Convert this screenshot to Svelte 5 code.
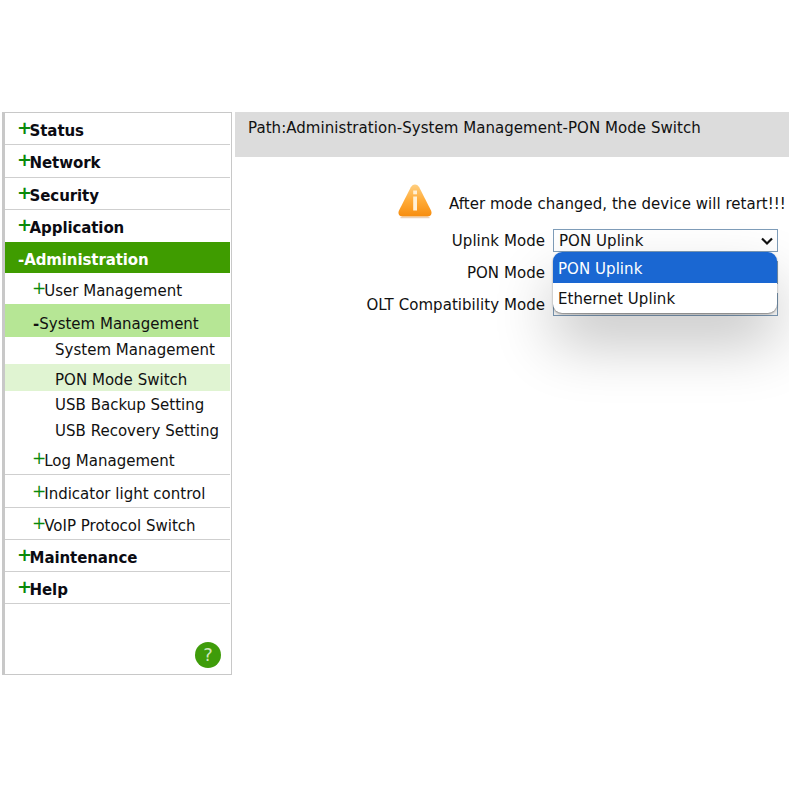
<script>
	const topBefore = ['Status', 'Network', 'Security', 'Application'];
	const subPages = [
		{ name: 'System Management', cls: 'first' },
		{ name: 'PON Mode Switch', cls: 'active' },
		{ name: 'USB Backup Setting', cls: 'backup' },
		{ name: 'USB Recovery Setting', cls: 'last' }
	];
	const subAfter = [
		{ name: 'Log Management', cls: '' },
		{ name: 'Indicator light control', cls: 'tall' },
		{ name: 'VoIP Protocol Switch', cls: '' }
	];
	const topAfter = ['Maintenance', 'Help'];
</script>

<div class="page">
	<aside class="sidebar">
		{#each topBefore as name}
			<div class="top-item"><span class="plus">+</span>{name}</div>
		{/each}
		<div class="top-item open"><span class="minus">-</span>Administration</div>
		<div class="sub-item plain"><span class="plus">+</span>User Management</div>
		<div class="sub-item open"><span class="minus">-</span>System Management</div>
		{#each subPages as page}
			<div class="page-item {page.cls}">{page.name}</div>
		{/each}
		{#each subAfter as item}
			<div class="sub-item {item.cls}"><span class="plus">+</span>{item.name}</div>
		{/each}
		{#each topAfter as name}
			<div class="top-item tail"><span class="plus">+</span>{name}</div>
		{/each}
		<div class="help-wrap">
			<div class="help">?</div>
		</div>
	</aside>

	<main class="content">
		<div class="path">Path:Administration-System Management-PON Mode Switch</div>
		<div class="warning">
			<svg width="38" height="37" viewBox="0 0 38 37">
				<defs>
					<linearGradient id="warn" x1="0" y1="0" x2="0" y2="1">
						<stop offset="0" stop-color="#ffcf80" />
						<stop offset="0.5" stop-color="#ffab38" />
						<stop offset="1" stop-color="#f78d0e" />
					</linearGradient>
				</defs>
				<path
					d="M19 1.500c2 0 3.300 1.200 4.200 2.800l11.800 23.200c1.500 3.200-.3 6-3.500 6H6.500c-3.200 0-5-2.800-3.500-6L14.800 4.300C15.700 2.700 17 1.500 19 1.500z"
					fill="url(#warn)"
				/>
				<path d="M4.500 34.500h29" stroke="#dcb48c" stroke-width="1.500" opacity="0.6" />
				<rect x="17.200" y="13.500" width="3.800" height="14" fill="#fff0d6" />
				<rect x="17.200" y="7.500" width="3.800" height="3.800" fill="#fff0d6" />
			</svg>
			<span class="warning-text">After mode changed, the device will retart!!!</span>
		</div>
		<div class="form">
			<div class="row">
				<span class="label">Uplink Mode</span>
				<div class="select">
					PON Uplink
					<svg class="chevron" width="14" height="9" viewBox="0 0 14 9">
						<path d="M2 1.500l5 5 5-5" fill="none" stroke="#111" stroke-width="2.200" />
					</svg>
				</div>
				<div class="popup">
					<div class="option selected">PON Uplink</div>
					<div class="option">Ethernet Uplink</div>
				</div>
			</div>
			<div class="row">
				<span class="label">PON Mode</span>
				<div class="select"></div>
			</div>
			<div class="row">
				<span class="label">OLT Compatibility Mode</span>
				<div class="select"></div>
			</div>
		</div>
	</main>
</div>

<style>
	:global(body) {
		margin: 0;
		background: #fff;
	}
	.page {
		display: flex;
		height: 789px;
		box-sizing: border-box;
		padding: 112px 0 0 2px;
		font-family: 'DejaVu Sans', Verdana, sans-serif;
		font-size: 15px;
		letter-spacing: 0.05px;
		color: #111;
		overflow: hidden;
	}
	.sidebar {
		width: 230px;
		height: 563px;
		box-sizing: border-box;
		border: 1px solid #c8c8c8;
		border-left-width: 3px;
		padding-right: 1px;
		display: flex;
		flex-direction: column;
		flex-shrink: 0;
	}
	.top-item {
		height: 32.400px;
		flex-shrink: 0;
		box-sizing: border-box;
		padding: 7px 0 0 13px;
		font-weight: bold;
		letter-spacing: -0.1px;
		line-height: 20px;
		border-bottom: 1px solid #cfcfcf;
		color: #0b0b12;
	}
	.top-item.open {
		height: 31px;
		margin-top: -0.800px;
		background: #3f9c00;
		color: #fff;
		border-bottom: none;
		padding-top: 8px;
	}
	.top-item.tail {
		height: 32px;
	}
	.sub-item {
		height: 32px;
		flex-shrink: 0;
		box-sizing: border-box;
		padding: 7px 0 0 28px;
		letter-spacing: 0;
		line-height: 20px;
		border-bottom: 1px solid #cfcfcf;
	}
	.sub-item.tall {
		height: 32.900px;
		padding-top: 8px;
	}
	.sub-item.plain {
		height: 31px;
		border-bottom: none;
	}
	.sub-item.open {
		background: #b6e695;
		border-bottom: none;
		height: 33px;
		padding-top: 10px;
	}
	.page-item {
		height: 27px;
		flex-shrink: 0;
		box-sizing: border-box;
		padding: 3px 0 0 50px;
		letter-spacing: 0.02px;
		line-height: 20px;
	}
	.page-item.active {
		background: #e0f4d2;
		padding-top: 6px;
	}
	.page-item.backup {
		height: 26.300px;
		padding-top: 4px;
	}
	.page-item.last {
		height: 26px;
		padding-top: 4px;
	}
	.plus {
		color: #0a8a0a;
		font-weight: bold;
		font-size: 18px;
		position: relative;
		top: -2px;
		letter-spacing: -3.500px;
		margin-left: -1px;
		margin-right: 1px;
	}
	.sub-item .plus {
		font-weight: normal;
		font-size: 17px;
		letter-spacing: -3px;
		margin-right: 1px;
	}
	.minus {
		font-weight: bold;
	}
	.help-wrap {
		flex: 1;
		display: flex;
		justify-content: flex-end;
		align-items: flex-end;
		padding: 0 9px 6px 0;
	}
	.help {
		width: 26px;
		height: 26px;
		border-radius: 50%;
		background: #3f9c0a;
		color: #cfe6bd;
		text-align: center;
		line-height: 26px;
		font-size: 18px;
	}
	.content {
		flex: 1;
		margin-left: 3px;
		min-width: 0;
	}
	.path {
		height: 45px;
		box-sizing: border-box;
		background: #dcdcdc;
		padding: 6px 0 0 13px;
		line-height: 20px;
		white-space: nowrap;
	}
	.warning {
		display: flex;
		align-items: center;
		gap: 15px;
		margin: 26px 0 0 161px;
		height: 37px;
		white-space: nowrap;
		letter-spacing: 0.03px;
	}
	.warning-text {
		padding-top: 5px;
	}
	.form {
		margin-top: 4px;
	}
	.row {
		position: relative;
		display: flex;
		align-items: center;
		justify-content: flex-end;
		gap: 8px;
		height: 32px;
		width: 543px;
	}
	.label {
		padding-top: 2px;
	}
	.select {
		position: relative;
		width: 225px;
		height: 23px;
		box-sizing: border-box;
		border: 1px solid #7f9db9;
		padding-left: 5px;
		line-height: 23px;
		background: #fff;
	}
	.chevron {
		position: absolute;
		right: 3px;
		top: 7px;
	}
	.popup {
		position: absolute;
		left: 318px;
		top: 28px;
		width: 223.500px;
		z-index: 2;
		background: #fff;
		border-radius: 9px;
		overflow: hidden;
		box-shadow:
			0 1px 2px rgba(0, 0, 0, 0.45),
			0 30px 60px rgba(0, 0, 0, 0.24);
	}
	.option {
		height: 30.500px;
		padding-left: 5px;
		line-height: 32px;
	}
	.option.selected {
		background: #1a67d2;
		color: #fff;
		line-height: 34px;
	}
</style>
